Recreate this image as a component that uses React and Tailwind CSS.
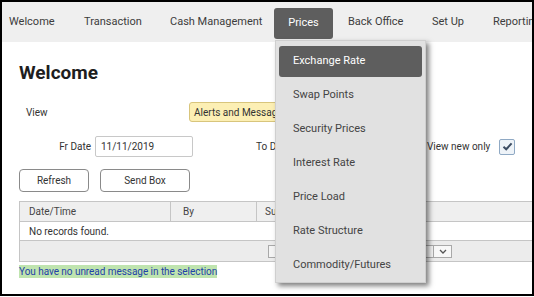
export default function App() {
  const items = [
    "Exchange Rate",
    "Swap Points",
    "Security Prices",
    "Interest Rate",
    "Price Load",
    "Rate Structure",
    "Commodity/Futures",
  ];
  return (
    <div className="w-[534px] h-[297px] bg-white font-['Roboto','Liberation_Sans',sans-serif]">
      <div className="relative w-[534px] h-[296px] border-2 border-black overflow-hidden bg-white">
        <nav className="flex h-[40px] bg-[#efefef] pl-[7px] text-[11px] text-[#3c3c3c] whitespace-nowrap">
          <div className="w-[75px] shrink-0 flex items-center">Welcome</div>
          <div className="w-[86px] shrink-0 flex items-center">Transaction</div>
          <div className="w-[104px] shrink-0 flex items-center">Cash Management</div>
          <div className="w-[59px] shrink-0 h-[31px] mt-[6px] rounded-[3px] bg-[#5e5e5e] text-white flex items-center justify-center">
            Prices
          </div>
          <div className="ml-[15px] w-[84px] shrink-0 flex items-center">Back Office</div>
          <div className="w-[61px] shrink-0 flex items-center">Set Up</div>
          <div className="shrink-0 flex items-center">Reporting</div>
        </nav>

        <main className="pl-[17px] text-[10px] text-[#333] whitespace-nowrap">
          <h1 className="mt-[19px] text-[19px] font-bold leading-[24px] text-[#1e1e1e]">Welcome</h1>

          <div className="mt-[17px] h-[20px] flex items-center">
            <span className="w-[170px] shrink-0 pl-[7px]">View</span>
            <div className="h-[20px] w-[130px] shrink-0 pl-[4px] bg-[#fcefb4] border border-[#d8c57c] rounded-[3px] flex items-center">
              Alerts and Messages
            </div>
          </div>

          <div className="mt-[14px] h-[21px] flex items-center">
            <span className="w-[72px] shrink-0 text-right">Fr Date</span>
            <div className="ml-[4px] w-[98px] shrink-0 h-[21px] border border-[#c8c8c8] rounded-[2px] pl-[5px] flex items-center">
              11/11/2019
            </div>
            <span className="ml-[63px] w-[40px] shrink-0">To Date</span>
            <div className="w-[100px] shrink-0 h-[21px] border border-[#c8c8c8] rounded-[2px]"></div>
            <span className="ml-[31px] w-[72px] shrink-0">View new only</span>
            <div className="w-[16px] h-[16px] shrink-0 border border-[#8fa9c4] bg-[#eef3f8] rounded-[2px] flex items-center justify-center">
              <svg width="11" height="9" viewBox="0 0 11 9">
                <path d="M1.5 4.8 L4.2 7.3 L9.6 1.4" fill="none" stroke="#3d4d63" strokeWidth="2" />
              </svg>
            </div>
          </div>

          <div className="mt-[12px] flex gap-[11px]">
            <button className="w-[70px] h-[23px] border border-[#8a8a8a] rounded-[4px] bg-white text-[#333]">Refresh</button>
            <button className="w-[90px] h-[23px] border border-[#8a8a8a] rounded-[4px] bg-white text-[#333]">Send Box</button>
          </div>

          <div className="mt-[9px] border-l border-t border-[#c5c5c5]">
            <div className="h-[20px] flex bg-[#efefef] border-b border-[#c5c5c5] text-[#444]">
              <div className="w-[151px] shrink-0 pl-[9px] border-r border-[#c5c5c5] flex items-center">Date/Time</div>
              <div className="w-[86px] shrink-0 pl-[12px] border-r border-[#c5c5c5] flex items-center">By</div>
              <div className="flex-1 pl-[8px] flex items-center">Subject</div>
            </div>
            <div className="h-[19px] flex items-center pl-[9px] border-b border-[#c5c5c5] bg-white">No records found.</div>
            <div className="h-[21px] flex items-center bg-[#ececec] border-b border-[#c5c5c5] pl-[248px]">
              <div className="w-[184px] h-[13px] border border-[#a9a9a9] bg-[#f4f4f4] flex justify-end">
                <div className="w-[18px] h-full border-l border-[#a9a9a9] flex items-center justify-center bg-[#f8f8f8]">
                  <svg width="8" height="5" viewBox="0 0 8 5">
                    <path d="M1 1 L4 4 L7 1" fill="none" stroke="#555" strokeWidth="1.3" />
                  </svg>
                </div>
              </div>
            </div>
          </div>

          <div className="mt-[2px]">
            <span className="bg-[#bfe4af] text-[#2242a8] leading-[13px] inline-block tracking-[-0.05px]">
              You have no unread message in the selection
            </span>
          </div>
        </main>

        <div className="absolute left-[273px] top-[38px] w-[151px] h-[243px] bg-[#e1e1e1] border border-[#cfcfcf] shadow-[3px_3px_5px_rgba(0,0,0,0.5)] pt-[5px] px-[3px] flex flex-col gap-[3px] text-[11px] text-[#444] whitespace-nowrap">
          {items.map((it, i) => (
            <div
              key={it}
              className={
                i === 0
                  ? "h-[31px] pl-[14px] flex items-center rounded-[3px] bg-[#5e5e5e] text-white"
                  : "h-[31px] pl-[14px] flex items-center"
              }
            >
              {it}
            </div>
          ))}
        </div>
      </div>
    </div>
  );
}
